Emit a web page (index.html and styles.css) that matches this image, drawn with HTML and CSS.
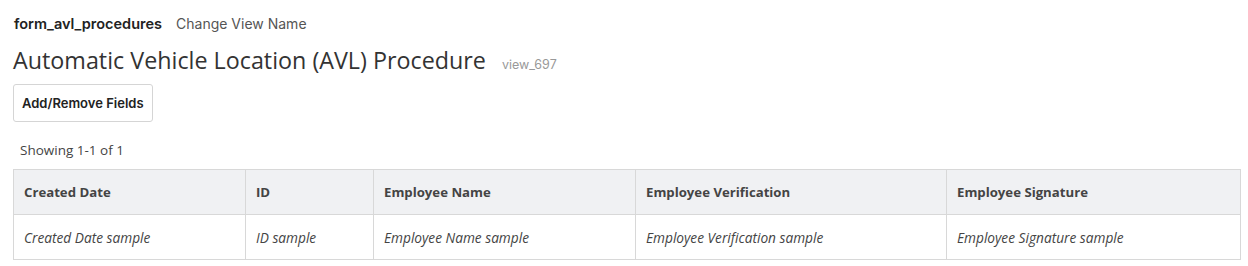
FILE: index.html
```html
<!DOCTYPE html>
<html lang="en">
<head>
    <meta charset="UTF-8">
    <title>form_avl_procedures</title>
    <link rel="stylesheet" href="styles.css">
</head>
<body>
    <div class="page">
        <div class="view-bar">
            <span class="form-name">form_avl_procedures</span>
            <a href="#" class="rename">Change View Name</a>
        </div>
        <div class="title-row">
            <h1>Automatic Vehicle Location (AVL) Procedure</h1>
            <span class="view-id">view_697</span>
        </div>
        <button type="button" class="fields-btn">Add/Remove Fields</button>
        <div class="showing">Showing 1-1 of 1</div>
        <table class="records">
            <thead>
                <tr>
                    <th class="c1">Created Date</th>
                    <th class="c2">ID</th>
                    <th class="c3">Employee Name</th>
                    <th class="c4">Employee Verification</th>
                    <th>Employee Signature</th>
                </tr>
            </thead>
            <tbody>
                <tr>
                    <td>Created Date sample</td>
                    <td>ID sample</td>
                    <td>Employee Name sample</td>
                    <td>Employee Verification sample</td>
                    <td>Employee Signature sample</td>
                </tr>
            </tbody>
        </table>
    </div>
</body>
</html>
```

FILE: styles.css
```css
body {
    margin: 0;
    font-family: Inter, "Liberation Sans", sans-serif;
    color: #222;
    background: #fff;
}

.page {
    padding: 13px 7px 0 13px;
}

.view-bar {
    display: flex;
    align-items: center;
    gap: 14px;
    font-size: 14.5px;
    height: 20px;
    padding-left: 1px;
}

.form-name {
    font-weight: 600;
    color: #222;
}

.rename {
    color: #555;
    font-size: 14px;
    text-decoration: none;
}

.title-row {
    display: flex;
    align-items: baseline;
    gap: 16px;
    margin-top: 12px;
}

h1 {
    margin: 0;
    font-family: "Open Sans", "Noto Sans", sans-serif;
    font-size: 23.3px;
    font-weight: 400;
    color: #333;
    line-height: 30px;
}

.view-id {
    font-size: 12.5px;
    color: #999;
}

.fields-btn {
    margin-top: 9px;
    height: 38px;
    padding: 0 8px;
    background: #fff;
    border: 1px solid #d5d5d5;
    border-radius: 3px;
    font-family: Inter, "Liberation Sans", sans-serif;
    font-size: 13px;
    font-weight: 600;
    color: #222;
}

.showing {
    font-family: "Open Sans", "Noto Sans", sans-serif;
    font-size: 13.5px;
    color: #444;
    margin: 19px 0 0 7px;
    height: 28px;
}

.records {
    width: 1228px;
    border-collapse: collapse;
    font-family: "Open Sans", "Noto Sans", sans-serif;
    font-size: 13.2px;
    color: #444;
}

.records th, .records td {
    border: 1px solid #d8d8d8;
    height: 44px;
    padding: 0 10px;
    text-align: left;
}

.records th {
    background: #f0f1f3;
    font-weight: 700;
}

.records td {
    font-style: italic;
    font-size: 13.7px;
}

.c1 { width: 211px; }
.c2 { width: 107px; }
.c3 { width: 241px; }
.c4 { width: 290px; }
```
